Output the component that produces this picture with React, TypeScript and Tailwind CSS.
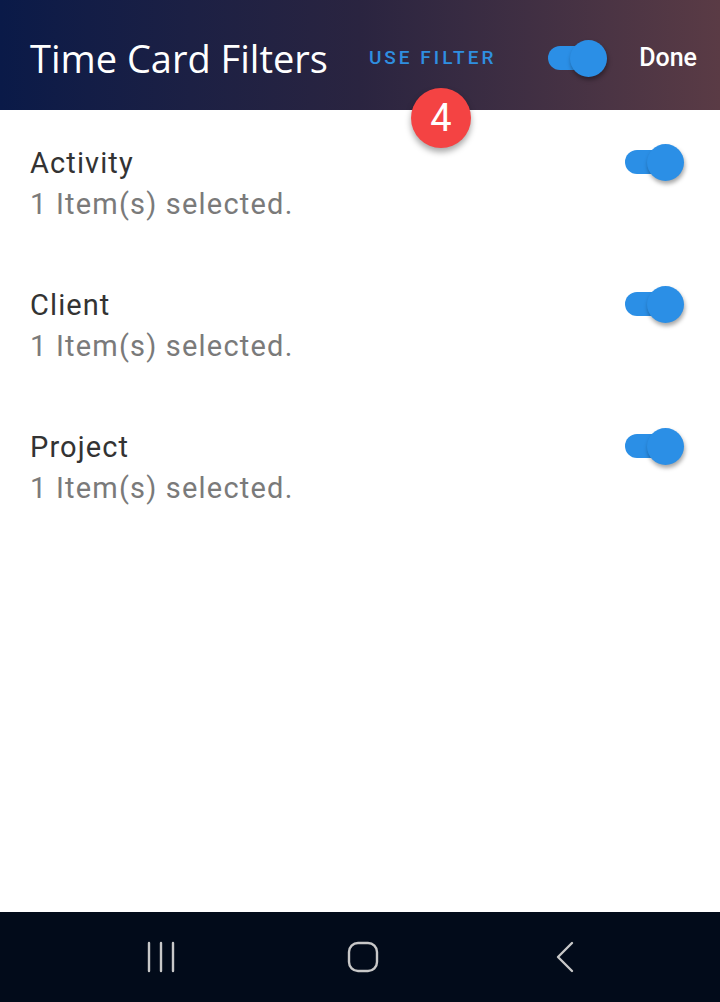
import React from "react";

const rows = ["Activity", "Client", "Project"];

function Toggle() {
  return (
    <div className="relative h-[40px] w-[62px]">
      <div className="absolute left-[1px] top-[8px] h-[24px] w-[46px] rounded-full bg-[#2b8fe6]" />
      <div className="absolute left-[23px] top-[2px] h-[37px] w-[37px] rounded-full bg-[#2b8fe6] shadow-[1px_3px_4px_rgba(0,0,0,0.35)]" />
    </div>
  );
}

export default function App() {
  return (
    <div className="relative flex h-[1002px] w-[720px] flex-col bg-white" style={{ fontFamily: "Roboto, sans-serif" }}>
      {/* header */}
      <header className="flex h-[110px] items-center bg-gradient-to-r from-[#0a1a48] via-[#2a2440] to-[#5a3b45] pb-[-4px] pl-[30px] pr-[23px] pt-[6px]">
        <h1 className="text-[38px] font-normal text-white" style={{ fontFamily: "'Open Sans', sans-serif" }}>
          Time Card Filters
        </h1>
        <span className="ml-[41px] text-[19px] font-medium tracking-[3px] text-[#2f8fe0]">USE FILTER</span>
        <div className="ml-[51px]">
          <Toggle />
        </div>
        <span className="ml-auto text-[25px] font-medium text-white">Done</span>
      </header>

      {/* badge */}
      <div className="absolute left-[411px] top-[88px] flex h-[60px] w-[60px] items-center justify-center rounded-full bg-[#f44343] text-[38px] text-white shadow-[0_4px_6px_rgba(0,0,0,0.35)]">
        4
      </div>

      {/* filter rows */}
      <main className="flex-1 pt-[33px]">
        {rows.map((r) => (
          <div key={r} className="flex h-[142px] items-start pl-[30px] pr-[34px]">
            <div className="flex-1">
              <div className="text-[29px] leading-[40px] tracking-[1.1px] text-[#333333]">{r}</div>
              <div className="text-[29px] leading-[42px] tracking-[1.2px] text-[#7a7a7a]">1 Item(s) selected.</div>
            </div>
            <div className="mt-[-1px]">
              <Toggle />
            </div>
          </div>
        ))}
      </main>

      {/* android nav bar */}
      <nav className="flex h-[90px] items-center gap-[142px] bg-[#020b1a] pl-[131px]">
        <div className="flex w-[60px] justify-center">
          <svg width="30" height="32" viewBox="0 0 30 32" className="text-[#c8c8c8]">
            <g stroke="currentColor" strokeWidth="2.4" strokeLinecap="round">
              <line x1="3" y1="2" x2="3" y2="30" />
              <line x1="15" y1="2" x2="15" y2="30" />
              <line x1="27" y1="2" x2="27" y2="30" />
            </g>
          </svg>
        </div>
        <div className="flex w-[60px] justify-center">
          <svg width="32" height="32" viewBox="0 0 32 32" className="text-[#c8c8c8]">
            <rect x="2" y="2" width="28" height="28" rx="9" fill="none" stroke="currentColor" strokeWidth="2.4" />
          </svg>
        </div>
        <div className="flex w-[60px] justify-center">
          <svg width="20" height="32" viewBox="0 0 20 32" className="text-[#c8c8c8]">
            <polyline points="17,2 3,16 17,30" fill="none" stroke="currentColor" strokeWidth="2.4" strokeLinecap="round" strokeLinejoin="round" />
          </svg>
        </div>
      </nav>
    </div>
  );
}
